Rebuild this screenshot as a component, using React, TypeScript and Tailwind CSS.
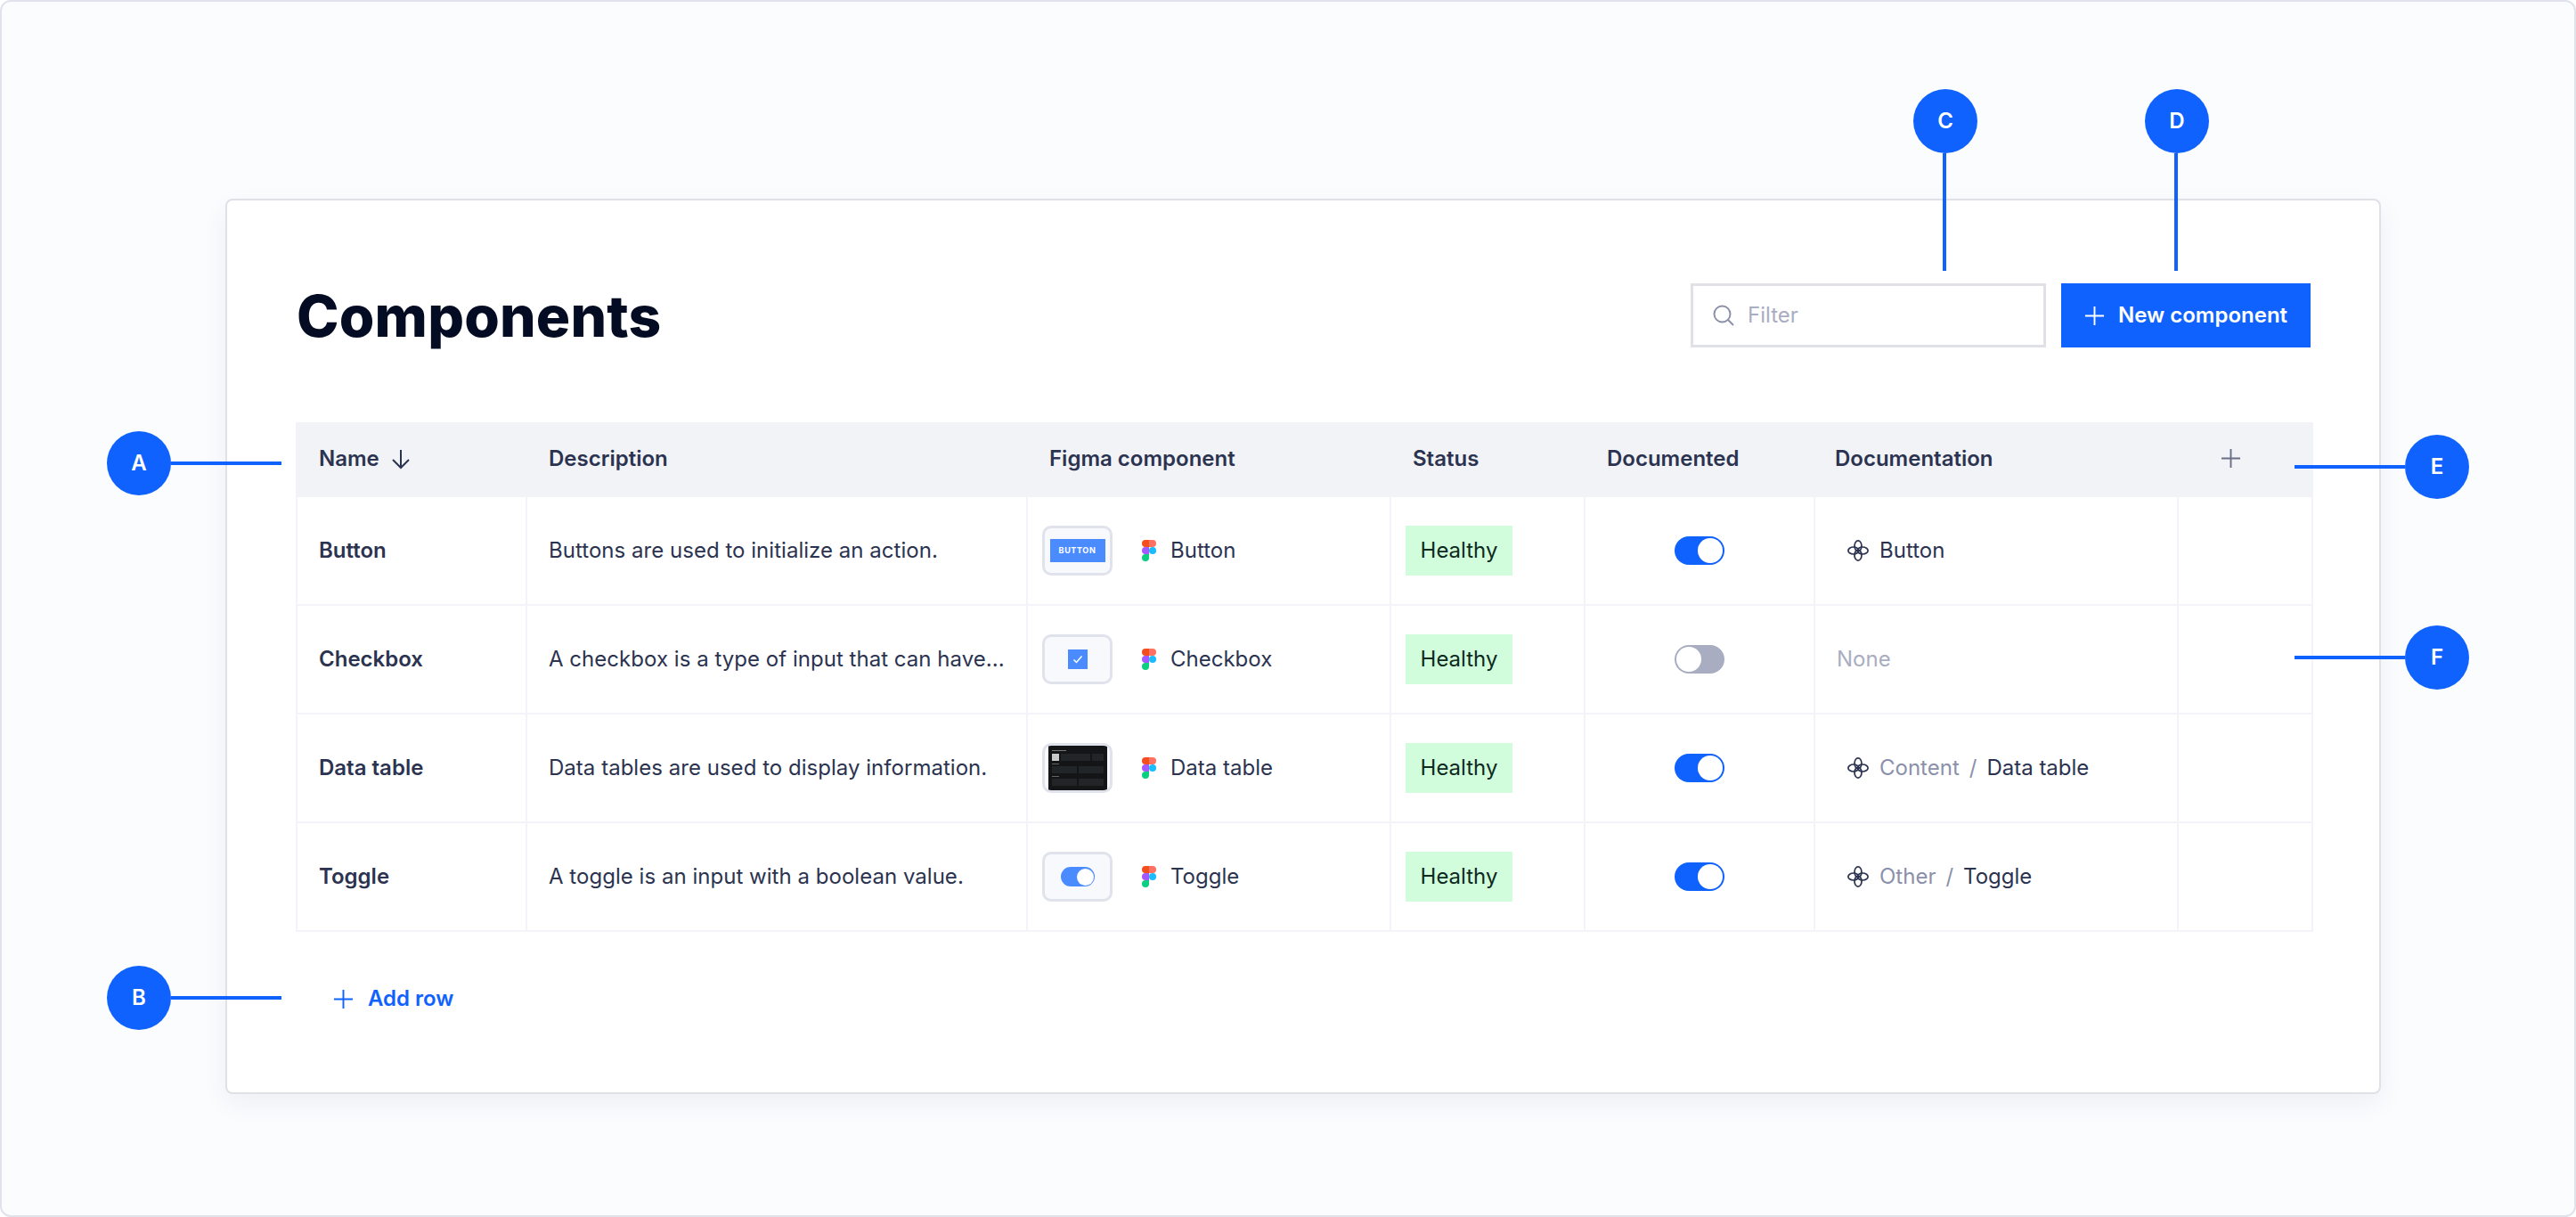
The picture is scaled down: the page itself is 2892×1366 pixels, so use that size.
const font = "font-['Inter',sans-serif]";

const rows = [
  { name: "Button", description: "Buttons are used to initialize an action.", thumb: "button", documented: true, section: "", doc: "Button" },
  { name: "Checkbox", description: "A checkbox is a type of input that can have...", thumb: "checkbox", documented: false, section: "", doc: "" },
  { name: "Data table", description: "Data tables are used to display information.", thumb: "table", documented: true, section: "Content", doc: "Data table" },
  { name: "Toggle", description: "A toggle is an input with a boolean value.", thumb: "toggle", documented: true, section: "Other", doc: "Toggle" },
];

function PlusIcon({ className }: { className: string }) {
  return (
    <svg viewBox="0 0 24 24" className={className} fill="none" stroke="currentColor" strokeWidth="2">
      <path d="M12 1v22M1 12h22" />
    </svg>
  );
}

function FigmaLogo() {
  return (
    <svg viewBox="0 0 16 24" className="w-4 h-6 shrink-0">
      <path fill="#F24E1E" d="M0 4a4 4 0 0 1 4-4h4v8H4a4 4 0 0 1-4-4z" />
      <path fill="#FF7262" d="M8 0h4a4 4 0 0 1 0 8H8z" />
      <path fill="#A259FF" d="M0 12a4 4 0 0 1 4-4h4v8H4a4 4 0 0 1-4-4z" />
      <circle fill="#1ABCFE" cx="12" cy="12" r="4" />
      <path fill="#0ACF83" d="M0 20a4 4 0 0 1 4-4h4v4a4 4 0 0 1-8 0z" />
    </svg>
  );
}

function DocIcon() {
  return (
    <svg viewBox="0 0 24 24" className="w-6 h-6 shrink-0 text-[#2b3350]" fill="none" stroke="currentColor" strokeWidth="1.7">
      <ellipse cx="12" cy="6.8" rx="4" ry="5.9" />
      <ellipse cx="12" cy="17.2" rx="4" ry="5.9" />
      <ellipse cx="6.8" cy="12" rx="5.9" ry="4" />
      <ellipse cx="17.2" cy="12" rx="5.9" ry="4" />
    </svg>
  );
}

function TableThumbRow() {
  return (
    <div className="flex flex-col gap-[2px]">
      <div className="w-[8px] h-[1px] bg-[#666]" />
      <div className="grid grid-cols-2 gap-[2px]">
        <div className="h-[8px] bg-[#222527]" />
        <div className="h-[8px] bg-[#222527]" />
      </div>
    </div>
  );
}

function Thumb({ kind }: { kind: string }) {
  return (
    <div className="w-[79px] h-[56px] shrink-0 rounded-[10px] border-[3px] border-[#e0e2ec] bg-[#f8f9fc] flex items-center justify-center overflow-hidden">
      {kind === "button" && (
        <div className="w-[62px] h-[26px] bg-[#4a8cff] flex items-center justify-center text-white text-[9px] font-bold tracking-[0.07em]">
          BUTTON
        </div>
      )}
      {kind === "checkbox" && (
        <div className="w-[22px] h-[22px] bg-[#4a8cff] flex items-center justify-center">
          <svg viewBox="0 0 12 12" className="w-3 h-3" fill="none" stroke="white" strokeWidth="1.5">
            <path d="M1.5 6.5l3 3 6-7" />
          </svg>
        </div>
      )}
      {kind === "toggle" && (
        <div className="w-[38px] h-[22px] rounded-full bg-[#4a8cff] flex items-center justify-end pr-[1px]">
          <div className="w-[19px] h-[19px] rounded-full bg-white" />
        </div>
      )}
      {kind === "table" && (
        <div className="w-[66px] h-full bg-[#141516] px-[4px] pt-[5px] flex flex-col gap-[3px]">
          <div className="w-[16px] h-[1px] bg-[#777]" />
          <div className="flex gap-[2px]">
            <div className="w-[8px] h-[8px] bg-[#c9c9c9]" />
            <div className="flex-1 h-[8px] bg-[#222527]" />
            <div className="w-[13px] h-[8px] bg-[#222527]" />
          </div>
          <TableThumbRow />
          <TableThumbRow />
        </div>
      )}
    </div>
  );
}

function Toggle({ on }: { on: boolean }) {
  return (
    <div
      className={`w-[56px] h-[32px] rounded-full flex items-center p-[2px] ${
        on ? "bg-[#1062fe] justify-end" : "bg-[#a9adc1] justify-start"
      }`}
    >
      <div className="w-[28px] h-[28px] rounded-full bg-white" />
    </div>
  );
}

// numbered marker that points at a part of the table
function Callout({ label, className, lineClassName }: { label: string; className: string; lineClassName: string }) {
  return (
    <>
      <div className={`absolute w-[72px] h-[72px] rounded-full bg-[#1062fe] text-white text-[24px] font-semibold flex items-center justify-center ${className}`}>
        {label}
      </div>
      <div className={`absolute bg-[#1062fe] ${lineClassName}`} />
    </>
  );
}

const headers = [
  { label: "Description", className: "pl-[26px]" },
  { label: "Figma component", className: "pl-[26px]" },
  { label: "Status", className: "pl-[26px]" },
  { label: "Documented", className: "pl-[26px]" },
  { label: "Documentation", className: "pl-[24px]" },
];
const cell = "border-l-2 border-b-2 border-[#f3f4f9] h-[122px] flex items-center";

export default function App() {
  return (
    <div className={`relative w-[2892px] h-[1366px] overflow-hidden bg-[#fbfcfe] border-2 border-[#e0e2ec] rounded-[12px] ${font} text-[24px] text-[#2b3350]`}>
      <div className="ml-[251px] mt-[221px] w-[2420px] h-[1005px] bg-white border-2 border-[#dfe1e7] rounded-[8px] shadow-[0_10px_30px_rgba(30,40,80,0.06)] pl-[77px] pr-[74px] pt-[93px]">
        {/* Title row */}
        <div className="flex items-center justify-between h-[72px]">
          <h1 className="text-[64px] font-extrabold text-[#040c24] leading-none tracking-[0.2px] pt-[2px] pl-[1px]">Components</h1>
          <div className="flex gap-[17px] mr-[3px]">
            <div className="w-[399px] h-[72px] border-[3px] border-[#e0e1e7] bg-white flex items-center pl-[22px] gap-[15px] text-[#a9adc1]">
              <svg viewBox="0 0 24 24" className="w-6 h-6" fill="none" stroke="#8b90a8" strokeWidth="2">
                <circle cx="10.5" cy="10.5" r="9" />
                <path d="M17 17l6 6" />
              </svg>
              Filter
            </div>
            <div className="w-[280px] h-[72px] bg-[#1062fe] text-white font-semibold flex items-center pl-[26px] gap-[15px]">
              <PlusIcon className="w-[23px] h-[23px]" />
              New component
            </div>
          </div>
        </div>

        {/* Table */}
        <div className="mt-[84px] grid grid-cols-[258px_562px_408px_218px_258px_408px_153px]">
          <div className="col-span-7 grid grid-cols-subgrid bg-[#f2f3f7] h-[84px] items-center font-semibold pb-[3px]">
            <div className="pl-[26px] flex items-center gap-[12px]">
              Name
              <svg viewBox="0 0 24 24" className="w-[24px] h-[24px] text-[#2b3350]" fill="none" stroke="currentColor" strokeWidth="2">
                <path d="M12 2v20M3 13l9 9 9-9" />
              </svg>
            </div>
            {headers.map((h) => (
              <div key={h.label} className={h.className}>{h.label}</div>
            ))}
            <div className="pl-[49px] text-[#6a6f88]">
              <PlusIcon className="w-[23px] h-[23px]" />
            </div>
          </div>

          {rows.map((r) => (
            <div key={r.name} className="col-span-7 grid grid-cols-subgrid">
              <div className={`${cell} pl-[24px] font-semibold`}>{r.name}</div>
              <div className={`${cell} pl-[24px] whitespace-nowrap tracking-[0.03px]`}>{r.description}</div>
              <div className={`${cell} pl-[16px]`}>
                <Thumb kind={r.thumb} />
                <div className="ml-[33px] mr-[16px]"><FigmaLogo /></div>
                {r.name}
              </div>
              <div className={`${cell} pl-[16px]`}>
                <div className="w-[120px] h-[56px] bg-[#d2fddc] text-[#0c2a20] flex items-center justify-center">Healthy</div>
              </div>
              <div className={`${cell} justify-center`}>
                <Toggle on={r.documented} />
              </div>
              <div className={`${cell} pl-[23px]`}>
                {r.doc ? (
                  <div className="flex items-center pl-[13px]">
                    <DocIcon />
                    <div className="ml-[12px] flex gap-[11px]">
                      {r.section && <span className="text-[#8b90ab]">{r.section}</span>}
                      {r.section && <span className="text-[#8b90ab]">/</span>}
                      <span>{r.doc}</span>
                    </div>
                  </div>
                ) : (
                  <span className="text-[#a9adc1] pl-[1px]">None</span>
                )}
              </div>
              <div className={`${cell} border-r-2`} />
            </div>
          ))}
        </div>

        {/* Add row */}
        <div className="mt-[57px] ml-[42px] flex items-center gap-[16px] text-[#1062fe] font-semibold">
          <PlusIcon className="w-[23px] h-[23px]" />
          Add row
        </div>
      </div>

      <Callout label="A" className="left-[118px] top-[482px]" lineClassName="left-[190px] top-[516px] w-[124px] h-[4px]" />
      <Callout label="B" className="left-[118px] top-[1082px]" lineClassName="left-[190px] top-[1116px] w-[124px] h-[4px]" />
      <Callout label="C" className="left-[2146px] top-[98px]" lineClassName="left-[2179px] top-[170px] w-[4px] h-[132px]" />
      <Callout label="D" className="left-[2406px] top-[98px]" lineClassName="left-[2439px] top-[170px] w-[4px] h-[132px]" />
      <Callout label="E" className="left-[2698px] top-[486px]" lineClassName="left-[2574px] top-[520px] w-[124px] h-[4px]" />
      <Callout label="F" className="left-[2698px] top-[700px]" lineClassName="left-[2574px] top-[734px] w-[124px] h-[4px]" />
    </div>
  );
}
